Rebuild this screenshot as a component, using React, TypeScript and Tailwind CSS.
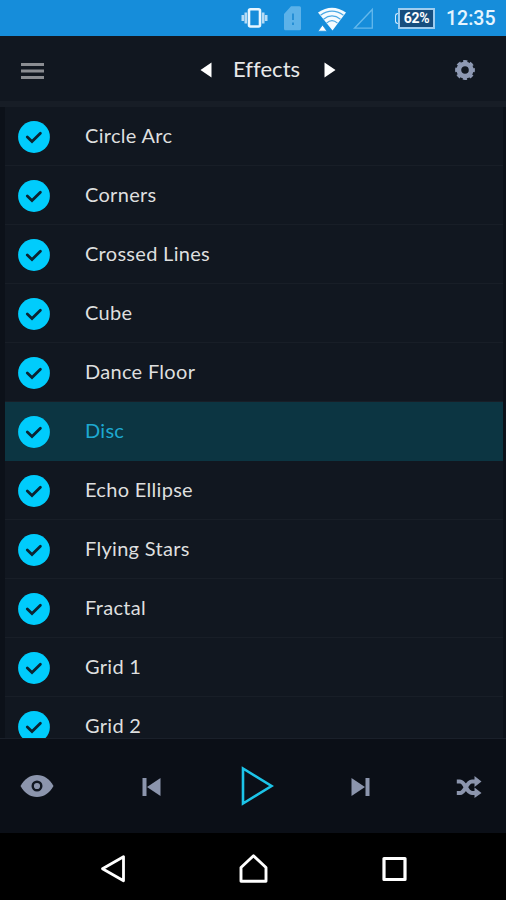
import React, { useState } from 'react';

const effects = [
  'Circle Arc',
  'Corners',
  'Crossed Lines',
  'Cube',
  'Dance Floor',
  'Disc',
  'Echo Ellipse',
  'Flying Stars',
  'Fractal',
  'Grid 1',
  'Grid 2',
];

const StatusBar: React.FC = () => (
  <div className="flex h-9 shrink-0 items-center bg-[#168dda] pl-[241px]">
    {/* Vibrate */}
    <svg className="h-9 w-[28px]" viewBox="0 0 28 36">
      <path d="M1.800 15v6M4.800 12.500v11M22.200 12.500v11M25.200 15v6" stroke="#b5dbf5" strokeWidth="2.600" />
      <rect x="8" y="9.200" width="11" height="17.300" rx="1.500" fill="none" stroke="#e8f6ff" strokeWidth="2.600" />
    </svg>
    {/* No SIM */}
    <svg className="ml-[14px] h-9 w-[20px]" viewBox="0 0 20 36">
      <path d="M8 6.300h8.500a1.500 1.500 0 0 1 1.500 1.500v21a1.500 1.500 0 0 1-1.500 1.500h-14A1.500 1.500 0 0 1 1 28.800V14z" fill="#5cb2e9" />
      <path d="M10 13.500v6.500M10 22.500v2.500" stroke="#268fd5" strokeWidth="2" />
    </svg>
    {/* Wifi */}
    <svg className="ml-[14px] h-9 w-[30px]" viewBox="0 0 30 36">
      <path d="M1 12.500Q15 2.800 29 12.500L15.500 30.500z" fill="#f4fbff" />
      <path d="M3.500 15.200Q15 7 26.500 15.200M6.500 19.200Q15 12.500 23.500 19.200M9.500 23.200Q15 18.200 20.500 23.200" fill="none" stroke="#4aa8e4" strokeWidth="1.100" />
      <path d="M1 31.200 5.500 25l4.500 6.200z" fill="#fff" stroke="#168dda" strokeWidth="0.800" />
    </svg>
    {/* Signal */}
    <svg className="ml-[5px] h-9 w-[22px]" viewBox="0 0 22 36">
      <path d="M20.300 9.500v18.700H2.500z" fill="none" stroke="#64b8ec" strokeWidth="1.300" />
    </svg>
    {/* Battery */}
    <div className="ml-[21px] flex items-center">
      <div className="h-[11px] w-[3px] rounded-l-sm border border-r-0 border-[#cfeaff]" />
      <div className="flex h-[21px] w-[37px] items-center justify-center border-2 border-[#9fcdef] bg-[#174e7e] font-['Roboto'] text-[14px] leading-none font-bold tracking-[-0.3px] text-white">
        62%
      </div>
    </div>
    <span className="mt-[2px] ml-[11px] font-['Roboto'] text-[19.500px] leading-none font-medium whitespace-nowrap text-[#e6f5ff]">12:35</span>
  </div>
);

const Header: React.FC = () => (
  <div className="flex h-[71px] shrink-0 flex-col bg-[#111720]">
    <div className="flex flex-1 items-center">
      <svg className="mt-[4px] ml-[20px] h-[18px] w-[25px]" viewBox="0 0 25 18">
        <path d="M1 2.500h23M1 9h23M1 15.400h23" stroke="#8b8d92" strokeWidth="3" />
      </svg>
      <svg className="mt-[3px] ml-[155px] h-4 w-3" viewBox="0 0 12 16">
        <path d="M11.500 .5v15L.5 8z" fill="#fff" />
      </svg>
      <h1 className="ml-[21px] w-[68px] font-['Lato'] text-[22px] leading-7 tracking-[0.05px] whitespace-nowrap text-[#e8e9ea]">Effects</h1>
      <svg className="mt-[3px] ml-[23px] h-4 w-3" viewBox="0 0 12 16">
        <path d="M.5 .5v15l11-7.500z" fill="#fff" />
      </svg>
      <svg className="mt-[3px] ml-[118px] h-[22px] w-[22px]" viewBox="0 0 22 22">
        <circle cx="11" cy="11" r="6.200" fill="none" stroke="#8e99b3" strokeWidth="4.800" />
        <circle cx="11" cy="11" r="8.500" fill="none" stroke="#8e99b3" strokeWidth="2.800" strokeDasharray="4.100 2.576" strokeDashoffset="2.050" />
      </svg>
    </div>
    <div className="h-[6px] bg-[#171d26]" />
  </div>
);

const EffectRow: React.FC<{ name: string; active: boolean; onSelect: () => void }> = ({ name, active, onSelect }) => (
  <button
    onClick={onSelect}
    className={`flex h-[59px] w-full shrink-0 items-center border-b text-left ${
      active ? 'border-[#0c3542] bg-[#0c3542] text-[#1ea9d0]' : 'border-[#181e27] bg-[#111720] text-[#dedfdf]'
    }`}
  >
    <svg className="mt-[2px] ml-[13px] h-8 w-8" viewBox="0 0 32 32">
      <circle cx="16" cy="16" r="15.900" fill="#00ccfc" />
      <path d="m9.300 16 4.700 4.600 8.400-8.400" fill="none" stroke="#0b2431" strokeWidth="2.800" strokeLinecap="round" />
    </svg>
    <span className="mb-[2px] ml-[35px] font-['Lato'] text-[20px] leading-6 tracking-[0.300px]">{name}</span>
  </button>
);

const PlayerBar: React.FC = () => (
  <div className="flex h-[95px] shrink-0 items-center border-t border-[#1a202a] bg-[#0b0f17]">
    <svg className="ml-[20px] h-[24px] w-[34px]" viewBox="0 0 34 24">
      <path d="M.5 12C5 4.500 10 1 17 1s12 3.500 16.500 11C29 19.500 24 23 17 23S5 19.500.5 12z" fill="#8c95ad" />
      <circle cx="17" cy="12" r="4.300" fill="none" stroke="#111722" strokeWidth="2.400" />
    </svg>
    <svg className="mt-[2px] ml-[88px] h-5 w-[19px]" viewBox="0 0 19 20">
      <path d="M.5 1h4v18h-4zM18.500 1v18L5 10z" fill="#8c95ad" />
    </svg>
    <svg className="ml-[79px] h-[42px] w-[34px]" viewBox="0 0 34 42">
      <path d="M3 3.500v35L31.500 21z" fill="none" stroke="#1cc4e8" strokeWidth="2.600" />
    </svg>
    <svg className="mt-[2px] ml-[77px] h-5 w-[19px]" viewBox="0 0 19 20">
      <path d="M14.500 1h4v18h-4zM.5 1v18L14 10z" fill="#8c95ad" />
    </svg>
    <svg className="mt-[1px] ml-[86px] h-[22px] w-[26px]" viewBox="0 0 26 22">
      <path d="M.8 5.500h3.200c5.500 0 6 11.500 12 11.500h3.500M.8 17h3.200c5.500 0 6-11.500 12-11.500h3.500" fill="none" stroke="#8c95ad" strokeWidth="4.200" />
      <path d="M18.500 0 25.500 5.500l-7 5.500zM18.500 11.500l7 5.500-7 5z" fill="#8c95ad" />
    </svg>
  </div>
);

const NavBar: React.FC = () => (
  <div className="flex h-[67px] shrink-0 items-center bg-black pt-[4px] pl-[100px]">
    <svg className="h-[30px] w-[27px]" viewBox="0 0 27 30">
      <path d="M23.500 2.800v24L2.500 14.800z" fill="none" stroke="#fff" strokeWidth="2.800" strokeLinejoin="round" />
    </svg>
    <svg className="ml-[111px] h-[30px] w-[31px]" viewBox="0 0 31 30">
      <path d="M15.500 1.800 3 13.500v13.700h25V13.500z" fill="none" stroke="#fff" strokeWidth="2.900" strokeLinejoin="round" />
    </svg>
    <svg className="ml-[111px] h-[30px] w-[29px]" viewBox="0 0 29 30">
      <rect x="4" y="4.500" width="21" height="21" fill="none" stroke="#fff" strokeWidth="3.200" strokeLinejoin="round" />
    </svg>
  </div>
);

const App: React.FC = () => {
  const [selected, setSelected] = useState('Disc');

  return (
    <div className="flex h-[900px] w-[506px] flex-col overflow-hidden bg-[#0c1119]">
      <StatusBar />
      <Header />
      <div className="flex min-h-0 flex-1 flex-col overflow-hidden pr-[3px] pl-[5px]">
        {effects.map((name) => (
          <EffectRow key={name} name={name} active={name === selected} onSelect={() => setSelected(name)} />
        ))}
      </div>
      <PlayerBar />
      <NavBar />
    </div>
  );
};

export default App;
